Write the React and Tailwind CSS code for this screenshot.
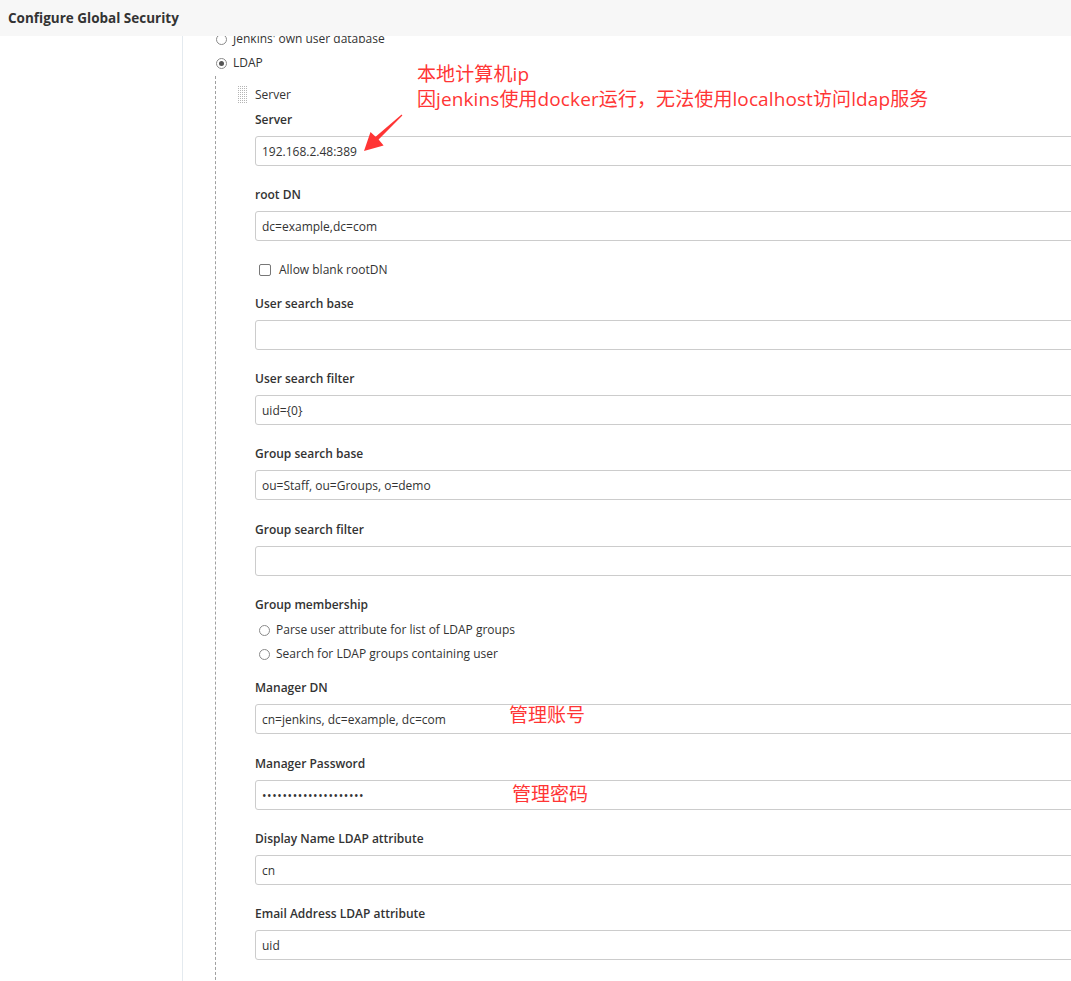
import React from "react";

const font = "font-['Open_Sans','Noto_Sans_CJK_SC',sans-serif]";

const Radio = ({ checked, label }) => (
  <div className="flex h-6 items-center">
    <span className="flex h-[11px] w-[11px] items-center justify-center rounded-full border border-[#8a8a8a] bg-white">
      {checked && <span className="h-[5px] w-[5px] rounded-full bg-[#555]" />}
    </span>
    <span className="ml-[6px] text-[#333]">{label}</span>
  </div>
);

const Grip = () => (
  <svg width="10" height="18" viewBox="0 0 10 18" className="block">
    {Array.from({ length: 9 }).map((_, r) =>
      Array.from({ length: 5 }).map((_, c) => (
        <rect key={r + "-" + c} x={c * 2} y={r * 2} width="1" height="1" fill="#b5b5b5" />
      ))
    )}
  </svg>
);

const Field = ({ label, value, mb = "mb-[18px]" }) => (
  <div className={mb}>
    <div className="h-5 pt-[2px] leading-[18px] font-semibold text-[#333]">{label}</div>
    <div className="mt-[7px] flex h-[30px] w-[840px] items-center rounded-[3px] border border-[#ccc] bg-white px-[6px] pt-[2px] text-[#333]">
      {value}
    </div>
  </div>
);

const Note = ({ className, children }) => (
  <div className={"absolute text-[19px] leading-[25px] text-[#ff3535] " + className}>
    {children}
  </div>
);

export default function App() {
  return (
    <div className={"relative h-[981px] w-[1071px] overflow-hidden bg-white text-[12px] " + font}>
      <div className="flex h-full">
        <div className="w-[183px] shrink-0 border-r border-[#e4eaef]" />
        <div className="flex-1 pt-[27px]">
          <div className="pl-[33px]">
            <Radio label="Jenkins' own user database" />
            <Radio checked label="LDAP" />
          </div>

          {/* LDAP block */}
          <div className="ml-[32px] mt-[1px] h-full border-l border-dashed border-[#a0a0a0] pl-[22px] pt-[9px]">
            <div className="flex h-5 items-center">
              <Grip />
              <span className="ml-[7px] text-[#333]">Server</span>
            </div>

            <div className="mt-1 pl-[17px]">
              <Field label="Server" value="192.168.2.48:389" />
              <Field label="root DN" value="dc=example,dc=com" mb="mb-[19px]" />

              <div className="mb-[13px] flex h-5 items-center pl-[4px]">
                <span className="h-[12px] w-[12px] rounded-[2px] border border-[#777] bg-white" />
                <span className="ml-[8px] text-[#333]">Allow blank rootDN</span>
              </div>

              <Field label="User search base" value="" />
              <Field label="User search filter" value="uid={0}" />
              <Field label="Group search base" value="ou=Staff, ou=Groups, o=demo" mb="mb-[19px]" />
              <Field label="Group search filter" value="" />

              <div className="mb-[11px]">
                <div className="h-5 pt-[2px] leading-[18px] font-semibold text-[#333]">Group membership</div>
                <div className="mt-[4px] pl-[4px]">
                  <Radio label="Parse user attribute for list of LDAP groups" />
                  <Radio label="Search for LDAP groups containing user" />
                </div>
              </div>

              <Field label="Manager DN" value="cn=jenkins, dc=example, dc=com" mb="mb-[19px]" />
              <Field
                label="Manager Password"
                value={<span className="tracking-[0.6px]">••••••••••••••••••••</span>}
              />
              <Field label="Display Name LDAP attribute" value="cn" />
              <Field label="Email Address LDAP attribute" value="uid" />
            </div>
          </div>
        </div>
      </div>

      {/* sticky header */}
      <div className="absolute left-0 top-0 flex h-9 w-full items-center bg-[#f7f7f7] pl-2 text-[13.5px] font-bold text-[#333]">
        Configure Global Security
      </div>

      {/* annotations */}
      <Note className="left-[417px] top-[62px] tracking-[0.1px]">
        本地计算机ip
        <br />
        因jenkins使用docker运行，无法使用localhost访问ldap服务
      </Note>
      <svg className="absolute left-0 top-0" width="1071" height="981" style={{ pointerEvents: "none" }}>
        <polygon
          points="402.4,115.4 378.6,139.5 383.6,145.6 364,151 370.5,132 375.6,136.8 401.6,114.6"
          fill="#ff3535"
        />
      </svg>
      <Note className="left-[509px] top-[703px]">管理账号</Note>
      <Note className="left-[512px] top-[782px]">管理密码</Note>
    </div>
  );
}
